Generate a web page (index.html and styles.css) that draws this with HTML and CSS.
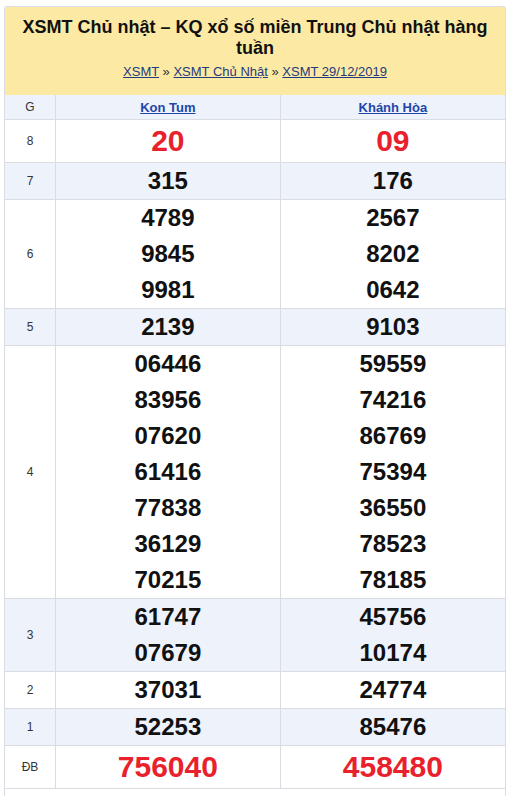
FILE: index.html
```html
<!DOCTYPE html>
<html lang="vi">
<head>
<meta charset="utf-8">
<link rel="stylesheet" href="styles.css">
</head>
<body>
<div class="box">
  <div class="head">
    <h2 class="title">XSMT Chủ nhật – KQ xổ số miền Trung Chủ nhật hàng tuần</h2>
    <div class="crumb"><a href="#">XSMT</a> » <a href="#">XSMT Chủ Nhật</a> » <a href="#">XSMT 29/12/2019</a></div>
  </div>
  <table class="kq">
    <thead>
      <tr class="alt"><th class="g">G</th><th><a href="#">Kon Tum</a></th><th><a href="#">Khánh Hòa</a></th></tr>
    </thead>
    <tbody>
      <tr class="big"><td class="g">8</td><td>20</td><td>09</td></tr>
      <tr class="alt"><td class="g">7</td><td>315</td><td>176</td></tr>
      <tr><td class="g">6</td><td><div>4789</div><div>9845</div><div>9981</div></td><td><div>2567</div><div>8202</div><div>0642</div></td></tr>
      <tr class="alt"><td class="g">5</td><td>2139</td><td>9103</td></tr>
      <tr><td class="g">4</td><td><div>06446</div><div>83956</div><div>07620</div><div>61416</div><div>77838</div><div>36129</div><div>70215</div></td><td><div>59559</div><div>74216</div><div>86769</div><div>75394</div><div>36550</div><div>78523</div><div>78185</div></td></tr>
      <tr class="alt"><td class="g">3</td><td><div>61747</div><div>07679</div></td><td><div>45756</div><div>10174</div></td></tr>
      <tr><td class="g">2</td><td>37031</td><td>24774</td></tr>
      <tr class="alt"><td class="g">1</td><td>52253</td><td>85476</td></tr>
      <tr class="big"><td class="g">ĐB</td><td>756040</td><td>458480</td></tr>
    </tbody>
  </table>
  <div class="foot"></div>
</div>
</body>
</html>
```
FILE: styles.css
```css
html, body { margin: 0; padding: 0; background: #fff; }
body { font-family: "Liberation Sans", Arial, sans-serif; color: #000; }
.box {
  margin: 6px 6px 0 4px;
  width: 502px;
  box-sizing: border-box;
  border: 1px solid #d9dce3;
  border-bottom: none;
  border-radius: 3px 3px 0 0;
  overflow: hidden;
}
.head {
  background: #fce9a4;
  text-align: center;
  padding: 10px 8px 15px;
}
.title {
  margin: 0;
  font-size: 18px;
  line-height: 21px;
  font-weight: bold;
  color: #111;
}
.crumb {
  margin-top: 4px;
  font-size: 13px;
  line-height: 17px;
  color: #333;
}
.crumb a { color: #243a7e; text-decoration: underline; }
.kq {
  width: 100%;
  border-collapse: collapse;
  table-layout: fixed;
}
.kq th, .kq td {
  border: 1px solid #d9dce3;
  text-align: center;
  padding: 0;
  vertical-align: middle;
}
.kq tr > :first-child { border-left: none; }
.kq tr > :last-child { border-right: none; }
.kq thead tr > * { border-top: none; }
.kq th {
  height: 24px;
  font-size: 13px;
  font-weight: bold;
}
.kq th a { color: #1f47a8; text-decoration: underline; }
.kq th.g, .kq td.g {
  width: 50px;
  font-size: 12px;
  font-weight: normal;
  color: #333;
}
.kq td {
  font-size: 24px;
  font-weight: bold;
  line-height: 36px;
  height: 36px;
  color: #111;
}
.kq td div { height: 36px; line-height: 36px; }
.kq tr.alt { background: #edf2fb; }
.kq tr.big td { height: 42px; line-height: 42px; font-size: 30px; color: #e8212c; }
.kq tr.big td.g { font-size: 12px; color: #333; }
.foot { height: 8px; }
```
